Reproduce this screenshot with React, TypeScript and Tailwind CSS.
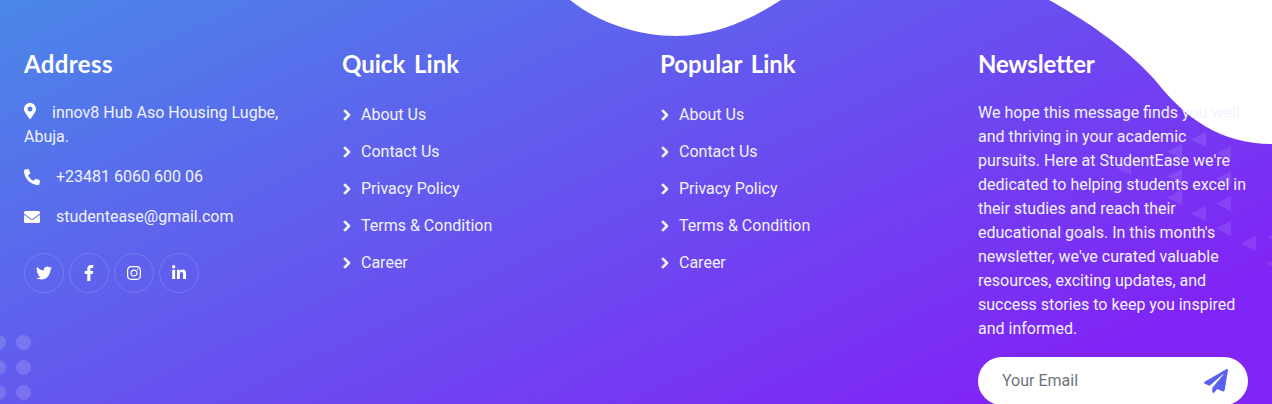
import { FaFacebookF, FaInstagram, FaLinkedinIn, FaTwitter, FaMapMarkerAlt, FaPhoneAlt, FaEnvelope, FaChevronRight, FaPaperPlane } from "react-icons/fa";

const quickLinks = ["About Us", "Contact Us", "Privacy Policy", "Terms & Condition", "Career"];

const triangles = [
	[1191, 132], [1167, 144], [1216, 146], [1116, 160], [1167, 169], [1216, 171], [1167, 190], [1216, 196], [1191, 206], [1216, 221], [1241, 236], [1267, 230], [1267, 256],
];

const Heading = ({ title, className = "" }: { title: string; className?: string }) => (
	<h3 className={`font-['Lato',sans-serif] text-2xl leading-[29px] font-bold text-white [word-spacing:3px] ${className}`}>{title}</h3>
);

const LinkColumn = ({ title }: { title: string }) => (
	<div>
		<Heading title={title} />
		<ul className="mt-[25px] flex flex-col gap-[13px]">
			{quickLinks.map((link) => (
				<li key={link} className="flex h-6 items-center gap-[9px] text-[#f0f3ff]">
					<FaChevronRight className="w-[10px] stroke-[40] text-xs text-white" />
					{link}
				</li>
			))}
		</ul>
	</div>
);

export default function App() {
	return (
		<footer className="relative h-[404px] w-full overflow-hidden bg-[linear-gradient(155deg,#4a87e8_0%,#8025f5_86%)] font-['Roboto',sans-serif] text-base leading-6">
			<svg className="absolute top-0 left-0" width="1272" height="404" viewBox="0 0 1272 404">
				<path d="M570 0C600 24 640 36 676 36C715 36 750 20 781 0Z" fill="#fff" />
				<path d="M1049 0C1080 17 1125 46 1155 80C1185 118 1220 144 1272 144V0Z" fill="#fff" />
				{triangles.map(([x, y]) => (
					<polygon key={`${x}-${y}`} points={`${x},${y + 7.5} ${x + 15},${y} ${x + 15},${y + 15}`} fill="#fff" fillOpacity="0.1" />
				))}
				{[-1.5, 23.5].map((cx) =>
					[342.5, 367.5, 392.5].map((cy) => <circle key={`${cx}-${cy}`} cx={cx} cy={cy} r="7.5" fill="#fff" fillOpacity="0.15" />),
				)}
			</svg>

			<div className="relative grid grid-cols-4 gap-x-12 px-6 pt-[49px]">
				<div>
					<Heading title="Address" className="tracking-[0.4px]" />
					<p className="mt-[23px] text-[#f0f3ff]">
						<FaMapMarkerAlt className="mr-4 inline-block w-3 align-[-1px] text-white" />
						innov8 Hub Aso Housing Lugbe, Abuja.
					</p>
					<p className="mt-4 flex items-center gap-4 text-[#f0f3ff]">
						<FaPhoneAlt className="w-4 text-white" />
						+23481 6060 600 06
					</p>
					<p className="mt-4 flex items-center gap-4 text-[#f0f3ff]">
						<FaEnvelope className="w-4 text-white" />
						studentease@gmail.com
					</p>
					<div className="mt-[24px] flex gap-[5px]">
						{[FaTwitter, FaFacebookF, FaInstagram, FaLinkedinIn].map((Icon, i) => (
							<a key={i} className="flex size-10 items-center justify-center rounded-full border border-white/15 text-white">
								<Icon className="text-base" />
							</a>
						))}
					</div>
				</div>

				<LinkColumn title="Quick Link" />
				<LinkColumn title="Popular Link" />

				<div>
					<Heading title="Newsletter" className="tracking-[-0.2px]" />
					<p className="mt-[23px] text-[#f0f3ff]">
						We hope this message finds you well and thriving in your academic pursuits. Here at StudentEase we're dedicated to helping students excel in their studies and reach their educational goals. In this month's newsletter, we've curated valuable resources, exciting updates, and success stories to keep you inspired and informed.
					</p>
					<div className="mt-4 flex h-[48px] items-center justify-between rounded-full bg-white pr-[20px] pl-6">
						<span className="text-[#6c757d]">Your Email</span>
						<FaPaperPlane className="text-2xl text-[#5b5ff0]" />
					</div>
				</div>
			</div>
		</footer>
	);
}
